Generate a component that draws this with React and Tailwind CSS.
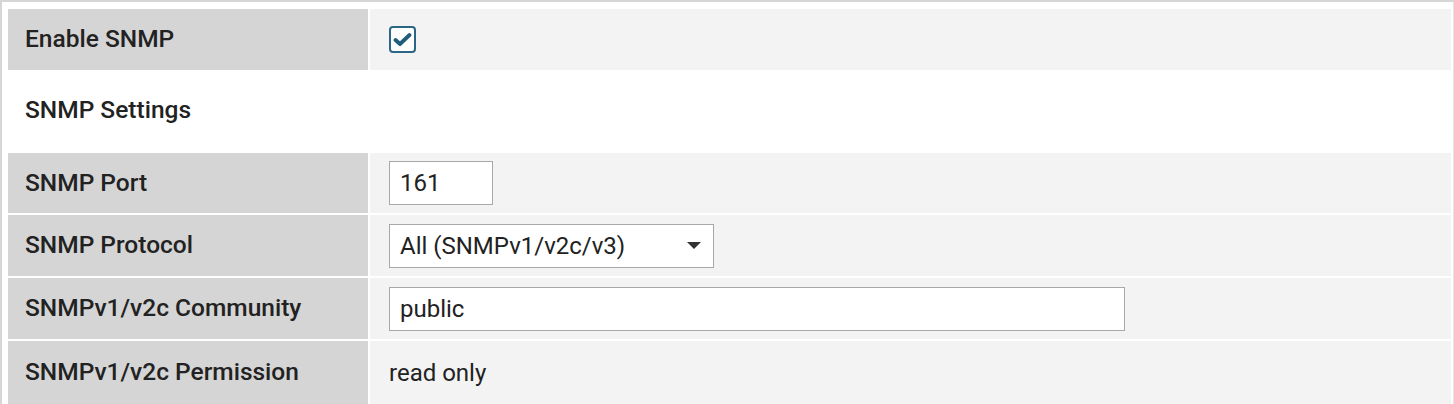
export default function App() {
  const font = { fontFamily: "Roboto, 'Liberation Sans', sans-serif" };
  const Label = ({ children }) => (
    <div className="w-[360px] shrink-0 bg-[#d5d5d5] pl-[17px] flex items-center text-[24.5px] font-medium text-[#222]">
      {children}
    </div>
  );
  const Value = ({ children }) => (
    <div className="flex-1 ml-[2px] bg-[#f3f3f3] pl-[19px] flex items-center text-[24px] text-[#222]">
      {children}
    </div>
  );
  return (
    <div
      className="w-[1454px] h-[404px] overflow-hidden bg-white border-t-2 border-l-2 border-[#d6d6d6]"
      style={font}
    >
      <div className="pt-[7px] pl-[6px] pr-[2px] flex flex-col border-r border-[#e4e4e4]">
        <div className="flex h-[61px]">
          <Label>Enable SNMP</Label>
          <Value>
            <div className="w-[27px] h-[27px] rounded-[4px] border-2 border-[#2b6784] bg-white flex items-center justify-center">
              <svg width="19" height="15" viewBox="0 0 19 15">
                <path d="M2.5 8 L7 12 L16.5 3" fill="none" stroke="#1f5e7b" strokeWidth="3.8" strokeLinecap="round" strokeLinejoin="round" />
              </svg>
            </div>
          </Value>
        </div>
        <div className="h-[83px] flex items-center pl-[17px] pb-[3px] text-[24.5px] font-medium text-[#222]">
          SNMP Settings
        </div>
        <div className="flex h-[60px]">
          <Label>SNMP Port</Label>
          <Value>
            <div className="w-[104px] h-[44px] border-[1.5px] border-[#a8a8a8] bg-white pl-[10px] flex items-center">161</div>
          </Value>
        </div>
        <div className="flex h-[61px] mt-[2px]">
          <Label>SNMP Protocol</Label>
          <Value>
            <div className="w-[325px] h-[44px] border-[1.5px] border-[#a8a8a8] bg-white pl-[10px] pr-[10px] flex items-center justify-between">
              <span>All (SNMPv1/v2c/v3)</span>
              <svg width="14" height="8" viewBox="0 0 14 8" className="mr-[2px]">
                <path d="M0 0 L14 0 L7 7 Z" fill="#333" />
              </svg>
            </div>
          </Value>
        </div>
        <div className="flex h-[61px] mt-[2px]">
          <Label>SNMPv1/v2c Community</Label>
          <Value>
            <div className="w-[736px] h-[44px] border-[1.5px] border-[#a8a8a8] bg-white pl-[10px] flex items-center">public</div>
          </Value>
        </div>
        <div className="flex h-[63px] mt-[2px]">
          <Label>SNMPv1/v2c Permission</Label>
          <Value>read only</Value>
        </div>
      </div>
    </div>
  );
}
